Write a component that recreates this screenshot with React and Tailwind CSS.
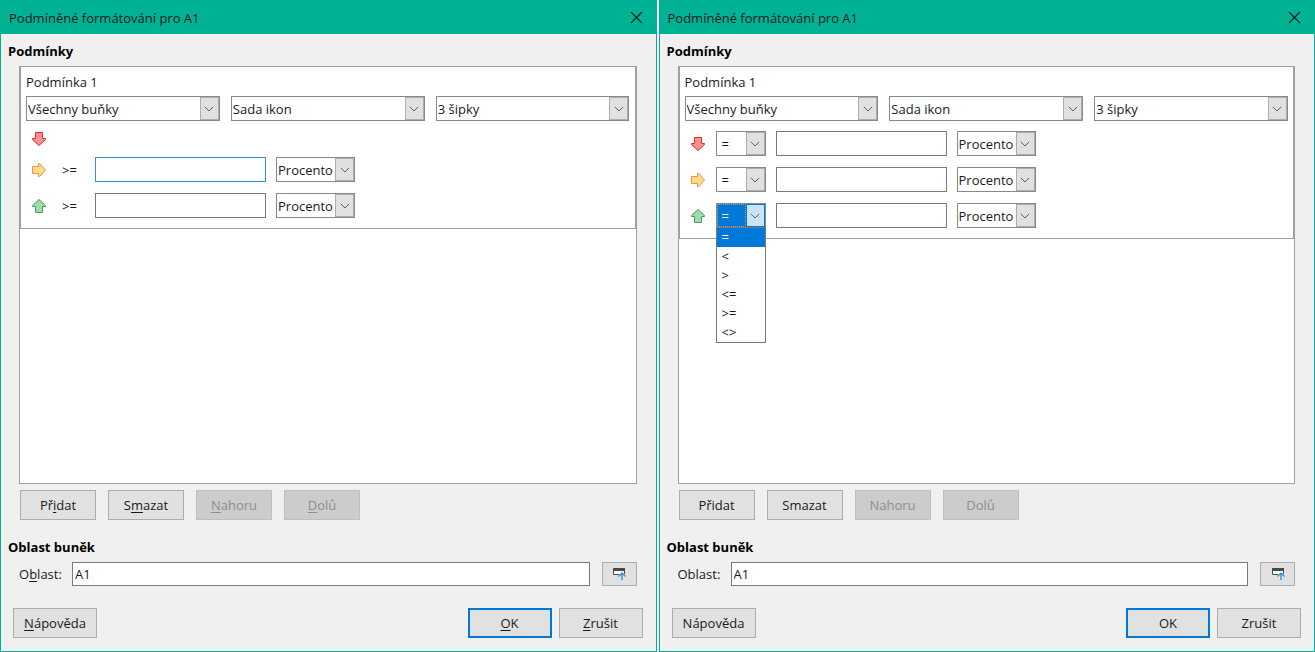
import { useId, useState } from 'react';
import clsx from 'clsx';

const operators = ['=', '<', '>', '<=', '>=', '<>'];

const arrowStyles = {
  down: { fill: '#ff8f92', stroke: '#e0302a', transform: undefined },
  right: { fill: '#fcdc8c', stroke: '#f0923c', transform: 'rotate(-90 8 8)' },
  up: { fill: '#a0dcaa', stroke: '#3fa05a', transform: 'rotate(180 8 8)' },
};

function ArrowIcon({ direction }) {
  const { fill, stroke, transform } = arrowStyles[direction];
  return (
    <svg className="size-4 shrink-0" viewBox="0 0 16 16" aria-hidden="true">
      <path
        d="M4.5 1.5h7v6h3v1L8 14.5 1.5 8.500v-1h3z"
        fill={fill}
        stroke={stroke}
        strokeLinejoin="round"
        transform={transform}
      />
    </svg>
  );
}

function ShrinkIcon() {
  return (
    <svg className="size-4" viewBox="0 0 16 16" aria-hidden="true">
      <path d="M2.500 2.500h11v6h-11z" fill="#fafafa" stroke="#4a4a48" />
      <path d="M2 2h12v3H2z" fill="#4a4a48" />
      <path d="M8 8h7v7H8z" fill="#e1e1e1" />
      <path d="M11 14V7M7.500 10.500L11 7l3.500 3.500" fill="none" stroke="#1e8bcd" strokeWidth="1.200" />
    </svg>
  );
}

// Text with one underlined access key
function Mnemonic({ text, at }) {
  if (at === undefined) return text;
  return (
    <>
      {text.slice(0, at)}
      <span className="underline underline-offset-2">{text[at]}</span>
      {text.slice(at + 1)}
    </>
  );
}

function Button({ text, at, primary, className, ...props }) {
  return (
    <button
      type="button"
      className={clsx(
        'h-[30px] whitespace-nowrap text-center disabled:border-[#bfbfbf] disabled:bg-[#cccccc] disabled:text-[#8e8e8e]',
        primary ? 'border-2 border-[#0078d7] bg-[#e1e1e1]' : 'border border-[#adadad] bg-[#e1e1e1]',
        className
      )}
      {...props}
    >
      <Mnemonic text={text} at={at} />
    </button>
  );
}

function Select({ label, options, value, onChange, open, indent, className }) {
  return (
    <div className={clsx('relative', className)}>
      <select
        aria-label={label}
        value={value}
        onChange={(e) => onChange?.(e.target.value)}
        className={clsx(
          'block h-[25px] w-full appearance-none border border-[#858990] pr-5 outline-none',
          indent ? 'pl-[5px]' : 'pl-px',
          open ? 'bg-[#0078d7] text-white' : 'bg-white'
        )}
      >
        {options.map((option) => (
          <option key={option}>{option}</option>
        ))}
      </select>
      {open && (
        <span className="pointer-events-none absolute inset-y-px right-5 left-px border border-dotted border-[#c99a6a]" />
      )}
      <span
        className={clsx(
          'pointer-events-none absolute inset-y-px right-px flex w-[19px] items-center justify-center border',
          open ? 'border-[#0078d7] bg-[#cce4f7]' : 'border-[#adadad] bg-[#e1e1e1]'
        )}
      >
        <svg className="h-[6px] w-[10px]" viewBox="0 0 10 6" aria-hidden="true">
          <path d="M0.800 0.800L5 5l4.200-4.200" fill="none" stroke="#606060" />
        </svg>
      </span>
      {open && (
        <ul
          role="listbox"
          aria-label={label}
          className="absolute top-full right-0 left-0 z-10 -mt-px border border-[#7a7a7a] bg-white"
        >
          {options.map((option) => (
            <li
              key={option}
              role="option"
              aria-selected={option === value}
              onClick={() => onChange?.(option)}
              className={clsx(
                'h-[19px] cursor-default pl-[5px] leading-[19px]',
                option === value && 'bg-[#0078d7] text-white'
              )}
            >
              {option}
            </li>
          ))}
        </ul>
      )}
    </div>
  );
}

function ThresholdRow({ direction, fixedOperator, open, focused }) {
  const [operator, setOperator] = useState('=');
  return (
    <div className="flex items-center gap-[10px] pl-[5px]">
      <ArrowIcon direction={direction} />
      {fixedOperator ? (
        <span className="w-7 pl-[5px]">{fixedOperator}</span>
      ) : (
        <Select
          label="Operátor"
          options={operators}
          value={operator}
          onChange={setOperator}
          open={open}
          indent
          className="w-[50px]"
        />
      )}
      <input
        type="text"
        aria-label="Hodnota"
        className={clsx(
          'h-[25px] w-[171px] border bg-white px-1 outline-none',
          focused ? 'border-[#2f8fe0]' : 'border-[#7a7a7a]'
        )}
      />
      <Select label="Typ hodnoty" options={['Procento']} value="Procento" className="w-[79px]" />
    </div>
  );
}

function Dialog({ mnemonics, children }) {
  const rangeId = useId();
  const key = (at) => (mnemonics ? at : undefined);

  return (
    <section className="flex min-h-screen min-w-0 flex-col border border-[#00b294] bg-[#f0f0f0]">
      <header className="flex h-[33px] items-center justify-between bg-[#00b294] pr-[13px] pl-2">
        <h1>Podmíněné formátování pro A1</h1>
        <button type="button" aria-label="Zavřít">
          <svg className="size-[13px]" viewBox="0 0 13 13" aria-hidden="true">
            <path d="M1 1l11 11M12 1L1 12" fill="none" stroke="#10201c" strokeWidth="1.100" />
          </svg>
        </button>
      </header>

      <div className="flex flex-1 flex-col px-[7px] pt-[7px]">
        <h2 className="font-bold text-black">Podmínky</h2>
        <div className="mt-[5px] mr-3 ml-[11px] flex-1 border border-[#a0a0a0] bg-white">
          <div className="border border-t-0 border-[#a0a0a0] px-[5px] pt-[5px] pb-[10px]">
            <p>Podmínka 1</p>
            <div className="mt-1 mb-[10px] grid grid-cols-3 gap-[11px]">
              <Select label="Podmínka" options={['Všechny buňky']} value="Všechny buňky" />
              <Select label="Formát" options={['Sada ikon']} value="Sada ikon" />
              <Select label="Ikony" options={['3 šipky']} value="3 šipky" />
            </div>
            <div className="flex flex-col gap-[11px]">{children}</div>
          </div>
        </div>

        <div className="mt-[6px] ml-3 flex gap-3">
          <Button text="Přidat" at={key(2)} className="w-[76px]" />
          <Button text="Smazat" at={key(1)} className="w-[76px]" />
          <Button text="Nahoru" at={key(0)} className="w-[76px]" disabled />
          <Button text="Dolů" at={key(0)} className="w-[76px]" disabled />
        </div>

        <h2 className="mt-[17px] font-bold text-black">Oblast buněk</h2>
        <div className="mt-[5px] mr-3 ml-[11px] flex h-6 items-center">
          <label htmlFor={rangeId} className="w-[53px]">
            <Mnemonic text="Oblast:" at={key(1)} />
          </label>
          <input
            id={rangeId}
            type="text"
            defaultValue="A1"
            className="h-6 min-w-0 flex-1 border border-[#7a7a7a] bg-white px-[2px] outline-none"
          />
          <button
            type="button"
            aria-label="Zmenšit"
            className="ml-3 flex h-6 w-[35px] items-center justify-center border border-[#adadad] bg-[#e1e1e1]"
          >
            <ShrinkIcon />
          </button>
        </div>
      </div>

      <footer className="mt-[22px] flex gap-[7px] pr-[13px] pb-[13px] pl-3">
        <Button text="Nápověda" at={key(0)} className="mr-auto w-[84px]" />
        <Button text="OK" at={key(0)} primary className="w-[84px]" />
        <Button text="Zrušit" at={key(0)} className="w-[84px]" />
      </footer>
    </section>
  );
}

export default function App() {
  return (
    <main className="grid grid-cols-2 gap-[2px] bg-white font-['Open_Sans',sans-serif] text-[13px] leading-5 text-[#1a1a1a]">
      <Dialog mnemonics>
        <div className="flex h-[15px] items-center pl-[5px]">
          <ArrowIcon direction="down" />
        </div>
        <ThresholdRow direction="right" fixedOperator=">=" focused />
        <ThresholdRow direction="up" fixedOperator=">=" />
      </Dialog>
      <Dialog>
        <ThresholdRow direction="down" />
        <ThresholdRow direction="right" />
        <ThresholdRow direction="up" open />
      </Dialog>
    </main>
  );
}
